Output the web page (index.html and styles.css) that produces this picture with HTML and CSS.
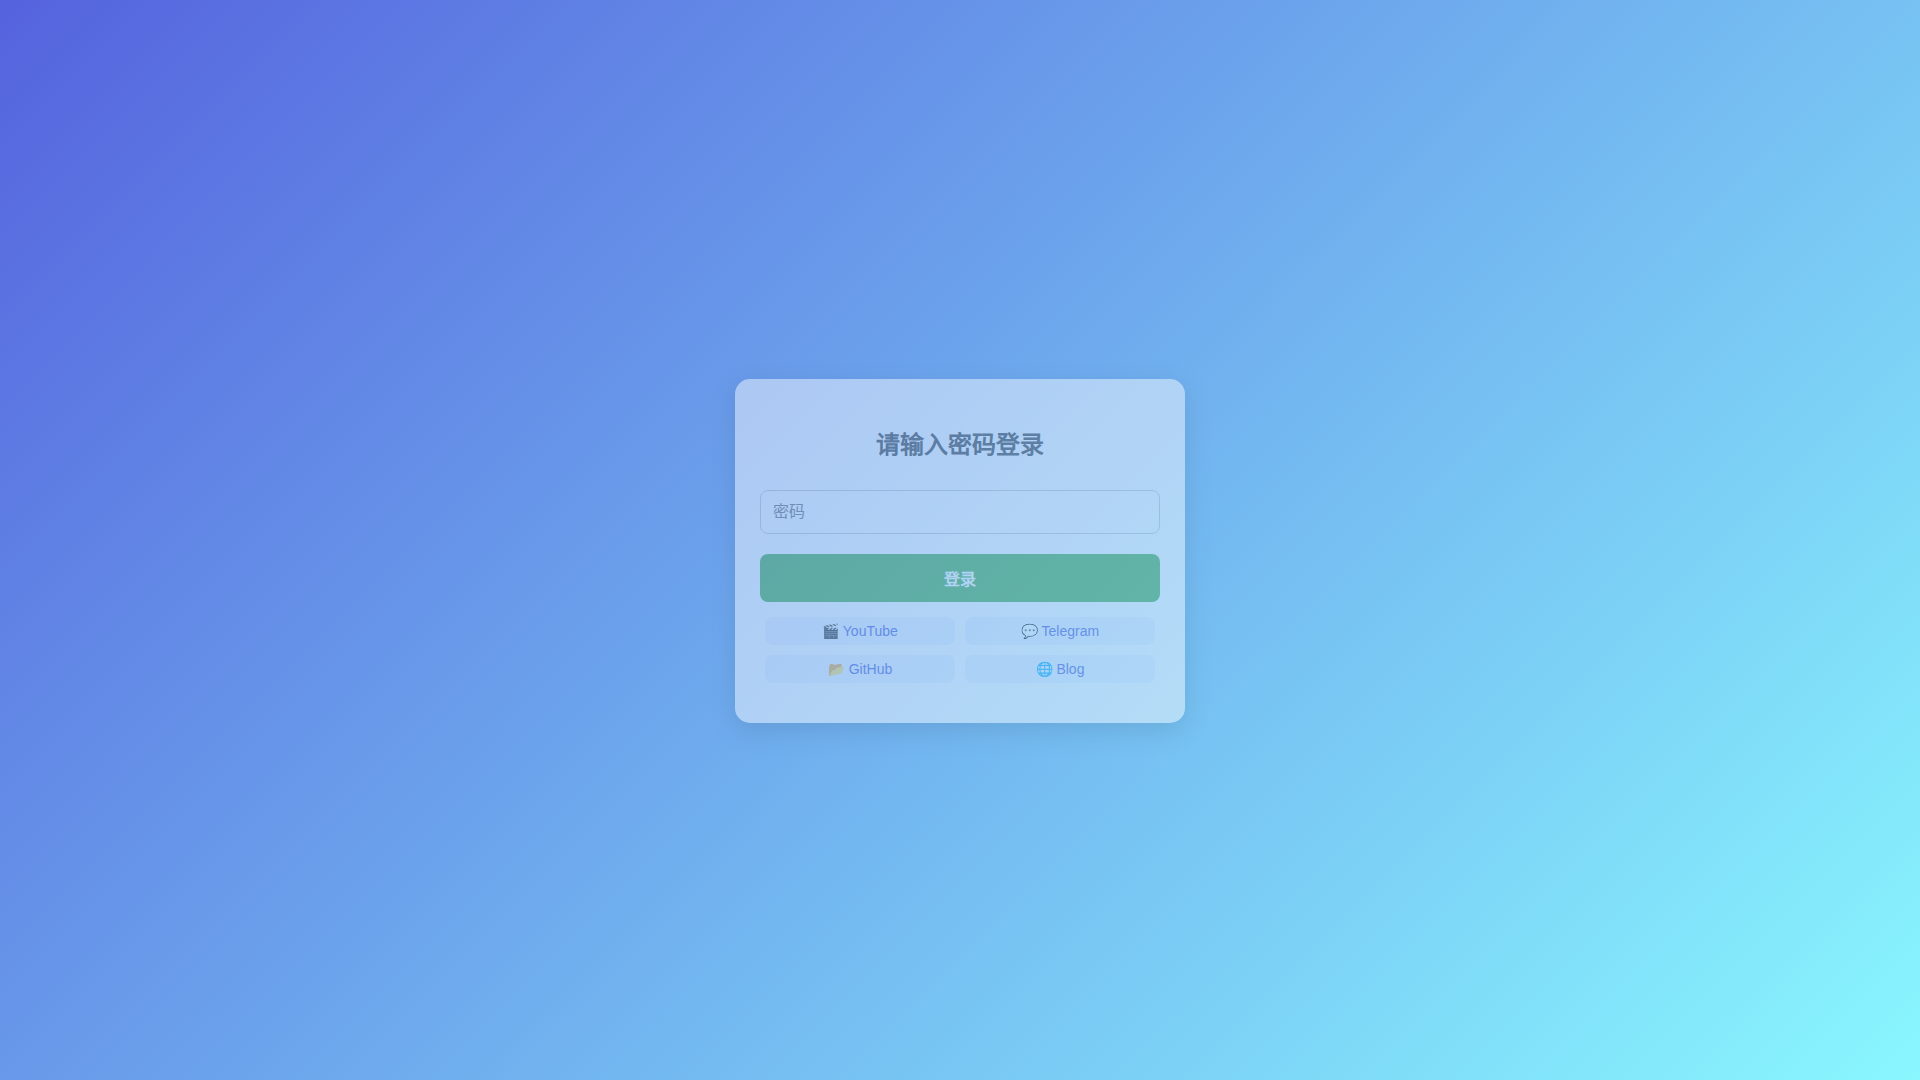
FILE: index.html
```html
<!DOCTYPE html>
<html lang="zh-CN">
<head>
<meta charset="UTF-8">
<meta name="viewport" content="width=device-width, initial-scale=1">
<title>登录</title>
<link rel="stylesheet" href="styles.css">
</head>
<body>
<main class="card">
  <h1 class="title">请输入密码登录</h1>
  <form class="form">
    <input class="field" type="password" placeholder="密码" aria-label="密码">
    <button class="submit" type="submit">登录</button>
  </form>
  <nav class="links">
    <a class="link" href="#youtube">🎬 YouTube</a>
    <a class="link" href="#telegram">💬 Telegram</a>
    <a class="link" href="#github">📂 GitHub</a>
    <a class="link" href="#blog">🌐 Blog</a>
  </nav>
</main>
</body>
</html>
```
FILE: styles.css
```css
* {
  box-sizing: border-box;
}

body {
  margin: 0;
  min-height: 100vh;
  display: flex;
  align-items: center;
  justify-content: center;
  padding-top: 22px;
  background: linear-gradient(135deg, #5563de, #89f7fe);
  font-family: "Liberation Sans", sans-serif;
}

.card {
  width: 100%;
  max-width: 450px;
  padding: 40px 25px;
  border-radius: 15px;
  background: #fff;
  box-shadow: 0 8px 25px rgba(0, 0, 0, 0.2);
  opacity: 0.45;
}

.title {
  margin: 0 0 20px;
  color: #4a4a4a;
  font-size: 24px;
  line-height: 51px;
  text-align: center;
}

.form {
  display: flex;
  flex-direction: column;
  gap: 20px;
}

.field {
  width: 100%;
  height: 44px;
  padding: 0 12px;
  border: 1px solid #ccc;
  border-radius: 8px;
  background: #fff;
  font: inherit;
  font-size: 16px;
}

.field::placeholder {
  color: #757575;
}

.submit {
  height: 48px;
  padding: 0;
  border: 0;
  border-radius: 8px;
  background: #4caf50;
  color: #fff;
  font: inherit;
  font-size: 16px;
  font-weight: bold;
}

.links {
  display: grid;
  grid-template-columns: 1fr 1fr;
  gap: 10px;
  margin-top: 15px;
  padding: 0 5px;
}

.link {
  border-radius: 8px;
  background: #f0f4ff;
  color: #5563de;
  font-size: 14px;
  line-height: 28px;
  text-align: center;
  text-decoration: none;
}
```
